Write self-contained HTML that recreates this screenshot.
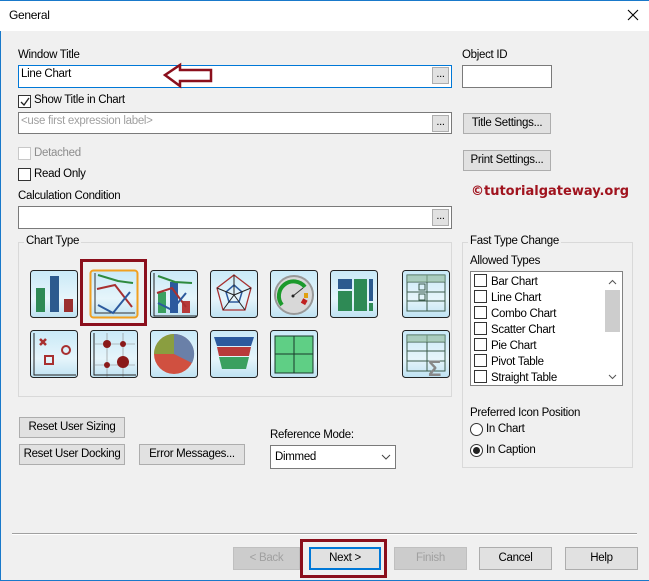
<!DOCTYPE html>
<html><head><meta charset="utf-8"><style>
*{box-sizing:border-box;margin:0;padding:0}
body{width:649px;height:581px;overflow:hidden;background:#f0f0f0;font-family:"Liberation Sans",sans-serif;font-size:11.5px;color:#000;position:relative;letter-spacing:-0.3px}
.a{position:absolute}
.tb{left:0;top:0;width:649px;height:31px;background:#fff;border-top:1px solid #1979ca}
.inp{background:#fff;border:1px solid #7a7a7a}
.btn{background:#e1e1e1;border:1px solid #adadad;text-align:center;line-height:19px}
.dot{background:#e1e1e1;border:1px solid #adadad;width:17px;height:17px;text-align:center;line-height:12px;font-size:11px}
.cb{width:13px;height:13px;border:1px solid #333;background:#fff}
.grp{border:1px solid #d9d9d9}
.lg{background:#f0f0f0;padding:0 2px}
.li{left:3px;height:16px;line-height:16px}
.li span{display:inline-block;width:13px;height:13px;border:1px solid #333;vertical-align:-2px;margin-right:4px;background:#fff}
</style></head><body>
<div class="a" style="left:0;top:0;width:1px;height:581px;background:#1979ca"></div>
<div class="a" style="left:0;top:580px;width:649px;height:1px;background:#1979ca"></div>
<div class="a tb"></div>
<div class="a" style="left:9px;top:8px;font-size:12px">General</div>
<svg class="a" style="left:627px;top:9px" width="12" height="12"><path d="M1 1L11 11M11 1L1 11" stroke="#000" stroke-width="1.1"/></svg>

<div class="a" style="left:18px;top:49px">Window Title</div>
<div class="a inp" style="left:18px;top:65px;width:434px;height:23px;border-color:#0078d7"></div>
<div class="a" style="left:21px;top:68px">Line Chart</div>
<div class="a dot" style="left:432px;top:67px">...</div>
<svg class="a" style="left:162px;top:62px" width="52" height="28"><path d="M3 13L18 3V8H49V19H18V24Z" fill="none" stroke="#8b0f1c" stroke-width="2.5" stroke-linejoin="miter"/></svg>
<div class="a" style="left:462px;top:49px">Object ID</div>
<div class="a inp" style="left:462px;top:65px;width:90px;height:23px"></div>

<div class="a cb" style="left:18px;top:95px"></div>
<svg class="a" style="left:19px;top:96px" width="12" height="12"><path d="M2 6L5 9L10 2" fill="none" stroke="#222" stroke-width="1.3"/></svg>
<div class="a" style="left:34px;top:94px">Show Title in Chart</div>
<div class="a inp" style="left:18px;top:112px;width:434px;height:22px"></div>
<div class="a" style="left:21px;top:115px;color:#a0a0a0">&lt;use first expression label&gt;</div>
<div class="a dot" style="left:432px;top:115px">...</div>
<div class="a btn" style="left:463px;top:113px;width:88px;height:21px">Title Settings...</div>

<div class="a cb" style="left:18px;top:147px;border-color:#c8c8c8"></div>
<div class="a" style="left:34px;top:147px;color:#8d8d8d">Detached</div>
<div class="a btn" style="left:463px;top:150px;width:88px;height:21px">Print Settings...</div>
<div class="a cb" style="left:18px;top:168px"></div>
<div class="a" style="left:34px;top:168px">Read Only</div>
<div class="a" style="left:471px;top:184px;color:#a0131e;font-weight:bold;font-size:13px;font-family:'DejaVu Sans',sans-serif;letter-spacing:0">©tutorialgateway.org</div>

<div class="a" style="left:18px;top:190px">Calculation Condition</div>
<div class="a inp" style="left:18px;top:206px;width:434px;height:23px"></div>
<div class="a dot" style="left:432px;top:209px">...</div>

<div class="a grp" style="left:18px;top:242px;width:434px;height:155px"></div>
<div class="a lg" style="left:24px;top:235px">Chart Type</div>

<svg class="a" style="left:0;top:255px" width="460" height="130">
<defs><linearGradient id="g" x1="0" y1="0" x2="0" y2="1"><stop offset="0" stop-color="#c9e9f7"/><stop offset="0.6" stop-color="#e6f5fb"/><stop offset="1" stop-color="#bfe2f2"/></linearGradient></defs>
<g stroke="#222" stroke-width="1" fill="url(#g)">
<rect x="30.5" y="15.5" width="47" height="47" rx="3"/>
<rect x="90.5" y="15.5" width="47" height="47" rx="3" stroke="#f0a020" stroke-width="2"/>
<rect x="150.5" y="15.5" width="47" height="47" rx="3"/>
<rect x="210.5" y="15.5" width="47" height="47" rx="3"/>
<rect x="270.5" y="15.5" width="47" height="47" rx="3"/>
<rect x="330.5" y="15.5" width="47" height="47" rx="3"/>
<rect x="402.5" y="15.5" width="47" height="47" rx="3"/>
<rect x="30.5" y="75.5" width="47" height="47" rx="3"/>
<rect x="90.5" y="75.5" width="47" height="47" rx="3"/>
<rect x="150.5" y="75.5" width="47" height="47" rx="3"/>
<rect x="210.5" y="75.5" width="47" height="47" rx="3"/>
<rect x="270.5" y="75.5" width="47" height="47" rx="3"/>
<rect x="402.5" y="75.5" width="47" height="47" rx="3"/>
</g>
<rect x="36" y="33" width="9" height="24" fill="#2e8a55"/><rect x="50" y="21" width="9" height="36" fill="#2c5a8e"/><rect x="64" y="44" width="9" height="13" fill="#9a2f2f"/>
<path d="M95 18V58H135" stroke="#333" fill="none"/>
<path d="M98 20L118 26L133 28" stroke="#2e8a3e" stroke-width="2" fill="none"/>
<path d="M97 34L115 30L132 52" stroke="#a83030" stroke-width="2" fill="none"/>
<path d="M98 50L113 58L130 37" stroke="#2c5a9e" stroke-width="2" fill="none"/>
<path d="M154 18V61H197" stroke="#222" fill="none"/>
<rect x="158" y="37" width="8" height="21" fill="#3aa060"/><rect x="170" y="27" width="8" height="31" fill="#2c5a9e"/><rect x="182" y="46" width="8" height="12" fill="#b83a3a"/>
<path d="M158 21L175 27L192 28" stroke="#2e8a3e" stroke-width="2" fill="none"/>
<path d="M157 38L172 33L186 52" stroke="#a83030" stroke-width="2" fill="none"/>
<path d="M158 48L172 55L186 38" stroke="#2c5a9e" stroke-width="2" fill="none"/>
<path d="M234 20L251 33L245 55L223 55L217 33Z" stroke="#a83030" fill="none" stroke-width="1.3"/>
<path d="M234 30L242 37L239 47L229 47L226 37Z" stroke="#2c5a9e" fill="none" stroke-width="1.5"/>
<path d="M234 20V40M251 33L234 40M245 55L234 40M223 55L234 40M217 33L234 40" stroke="#222"/>
<circle cx="294" cy="40" r="19" fill="#d8d8d8" stroke="#999" stroke-width="2"/>
<path d="M282 50A14 14 0 1 1 305 32" stroke="#1c9a2c" stroke-width="4" fill="none"/>
<rect x="304" y="38" width="4" height="5" fill="#e0a010"/><rect x="302" y="44" width="5" height="5" fill="#c02020" transform="rotate(30 304 46)"/>
<path d="M293 41L303 33" stroke="#333"/><circle cx="293" cy="41" r="1.5" fill="#222"/>
<rect x="338" y="24" width="14" height="10" fill="#2c5a8e"/><rect x="338" y="36" width="14" height="20" fill="#2e8a55"/><rect x="354" y="24" width="13" height="32" fill="#2e8a55"/><rect x="369" y="24" width="4" height="22" fill="#2c5a8e"/><rect x="369" y="48" width="4" height="8" fill="#2e8a55"/>
<g stroke="#3a5a4a" fill="none"><rect x="407" y="20" width="38" height="36"/><path d="M407 27H445M407 37H445M407 46H445M427 20V56"/><rect x="419" y="29" width="6" height="6"/><rect x="419" y="39" width="6" height="6"/></g>
<rect x="407" y="20" width="38" height="7" fill="#8fb89a" opacity=".6"/>
<path d="M34 78V120H76" stroke="#222" fill="none"/>
<path d="M40 84L46 90M46 84L40 90" stroke="#a83030" stroke-width="2.5"/>
<circle cx="66" cy="95" r="4" stroke="#a83030" stroke-width="2" fill="none"/>
<rect x="45" y="101" width="8" height="8" stroke="#a83030" stroke-width="2" fill="none"/>
<path d="M94 78V120H136M95 89H135M95 110H135M107 78V122M123 78V122" stroke="#888" stroke-width=".6" fill="none"/>
<path d="M94 78V120H136" stroke="#222" fill="none"/>
<circle cx="107" cy="89" r="4" fill="#8a1a1a"/><circle cx="123" cy="89" r="3" fill="#8a1a1a"/><circle cx="107" cy="110" r="3" fill="#8a1a1a"/><circle cx="123" cy="107" r="6" fill="#8a1a1a"/>
<circle cx="174" cy="99" r="20" fill="#d05040"/>
<path d="M174 99V79A20 20 0 0 1 192 108Z" fill="#6a80a8"/>
<path d="M174 99H154A20 20 0 0 1 174 79Z" fill="#8a9e40"/>
<path d="M214 82H254L251 91H217Z" fill="#2c5a9e"/><path d="M217 92H251L249 101H219Z" fill="#b83a3a"/><path d="M219 102H249L246 114H222Z" fill="#3aa060"/>
<g fill="#5fcf85" stroke="#1a3a2a"><rect x="275" y="81" width="19" height="18"/><rect x="294" y="81" width="19" height="18"/><rect x="275" y="99" width="19" height="19"/><rect x="294" y="99" width="19" height="19"/></g>
<g stroke="#3a5a4a" fill="none"><rect x="407" y="80" width="38" height="36"/><path d="M407 87H445M407 96H445M407 106H445M427 80V116"/></g>
<rect x="407" y="80" width="38" height="7" fill="#8fb89a" opacity=".6"/>
<text x="428" y="121" font-family="Liberation Sans" font-size="22" font-weight="bold" fill="#888">Σ</text>
</svg>
<div class="a" style="left:80px;top:259px;width:67px;height:67px;border:3px solid #8b0f1c"></div>

<div class="a grp" style="left:462px;top:242px;width:171px;height:226px"></div>
<div class="a lg" style="left:468px;top:235px">Fast Type Change</div>
<div class="a" style="left:470px;top:255px">Allowed Types</div>
<div class="a inp" style="left:470px;top:271px;width:153px;height:115px;border-color:#828282">
<div class="a li" style="top:2px"><span></span>Bar Chart</div>
<div class="a li" style="top:18px"><span></span>Line Chart</div>
<div class="a li" style="top:34px"><span></span>Combo Chart</div>
<div class="a li" style="top:50px"><span></span>Scatter Chart</div>
<div class="a li" style="top:66px"><span></span>Pie Chart</div>
<div class="a li" style="top:82px"><span></span>Pivot Table</div>
<div class="a li" style="top:98px"><span></span>Straight Table</div>
<div class="a" style="left:134px;top:18px;width:15px;height:42px;background:#cdcdcd"></div>
<svg class="a" style="left:137px;top:7px" width="9" height="6"><path d="M1 5L4.5 1.5L8 5" fill="none" stroke="#555"/></svg>
<svg class="a" style="left:137px;top:102px" width="9" height="6"><path d="M1 1L4.5 4.5L8 1" fill="none" stroke="#555"/></svg>
</div>
<div class="a" style="left:470px;top:407px">Preferred Icon Position</div>
<div class="a" style="left:470px;top:423px;width:13px;height:13px;border:1px solid #333;border-radius:50%;background:#fff"></div>
<div class="a" style="left:486px;top:423px">In Chart</div>
<div class="a" style="left:470px;top:444px;width:13px;height:13px;border:1px solid #333;border-radius:50%;background:#fff"></div>
<div class="a" style="left:473px;top:447px;width:7px;height:7px;border-radius:50%;background:#222"></div>
<div class="a" style="left:486px;top:444px">In Caption</div>

<div class="a btn" style="left:19px;top:417px;width:106px;height:21px">Reset User Sizing</div>
<div class="a btn" style="left:19px;top:444px;width:106px;height:21px">Reset User Docking</div>
<div class="a btn" style="left:139px;top:444px;width:106px;height:21px">Error Messages...</div>
<div class="a" style="left:270px;top:429px">Reference Mode:</div>
<div class="a inp" style="left:270px;top:445px;width:126px;height:24px"></div>
<div class="a" style="left:275px;top:451px">Dimmed</div>
<svg class="a" style="left:381px;top:454px" width="10" height="6"><path d="M1 1L5 5L9 1" fill="none" stroke="#444"/></svg>

<div class="a" style="left:12px;top:533px;width:625px;height:1px;background:#a0a0a0"></div>
<div class="a" style="left:12px;top:534px;width:625px;height:1px;background:#fff"></div>
<div class="a btn" style="left:233px;top:547px;width:67px;height:23px;line-height:21px;color:#a0a0a0;background:#ccc;border-color:#bfbfbf">&lt; Back</div>
<div class="a btn" style="left:309px;top:547px;width:72px;height:23px;line-height:19px;border:2px solid #0078d7">Next &gt;</div>
<div class="a btn" style="left:394px;top:547px;width:73px;height:23px;line-height:21px;color:#a0a0a0;background:#ccc;border-color:#bfbfbf">Finish</div>
<div class="a btn" style="left:479px;top:547px;width:73px;height:23px;line-height:21px">Cancel</div>
<div class="a btn" style="left:565px;top:547px;width:73px;height:23px;line-height:21px">Help</div>
<div class="a" style="left:300px;top:539px;width:87px;height:39px;border:3px solid #8b0f1c"></div>
</body></html>
